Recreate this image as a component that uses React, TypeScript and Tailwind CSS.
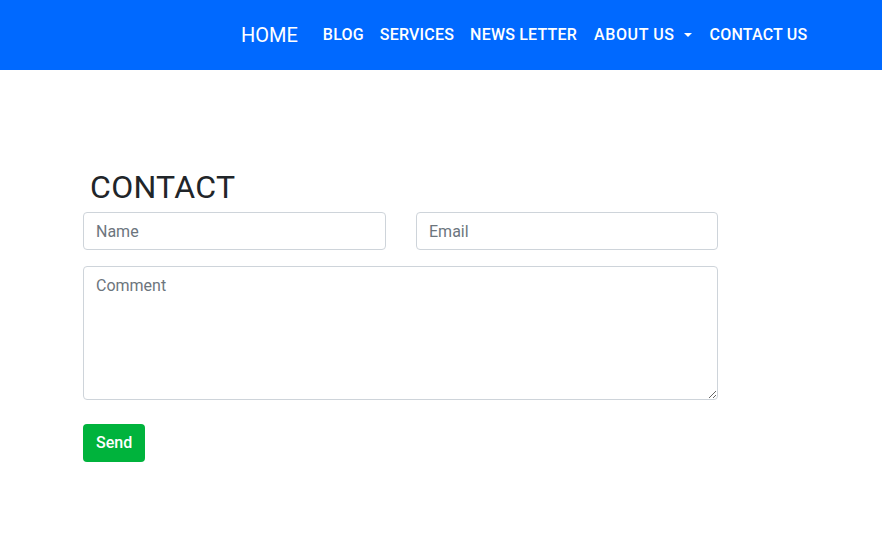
import React from "react";

export default function App() {
  const font = { fontFamily: 'Roboto, "Liberation Sans", Arial, sans-serif' };
  return (
    <div className="min-h-[550px] bg-white" style={font}>
      <nav className="h-[70px] bg-[#0069ff] flex items-center">
        <div className="flex items-center ml-[241px] text-white">
          <span className="text-[20px] mr-[25px] leading-none">HOME</span>
          <div className="flex items-center gap-[16px] text-[16px] font-medium leading-none tracking-[0.2px]">
            <span>BLOG</span>
            <span>SERVICES</span>
            <span className="mr-[1px]">NEWS LETTER</span>
            <span className="flex items-center tracking-[0.6px]">
              ABOUT US
              <span className="ml-[9px] inline-block w-0 h-0 border-l-[4px] border-r-[4px] border-t-[4px] border-l-transparent border-r-transparent border-t-white" />
            </span>
            <span className="ml-[2px]">CONTACT US</span>
          </div>
        </div>
      </nav>
      <div className="pl-[83px] w-[718px] pt-[98px]">
        <h1 className="text-[32px] leading-[38px] font-normal tracking-[0.3px] text-[#212529] ml-[7px] mb-[6px]">CONTACT</h1>
        <div className="flex gap-[30px] mb-[16px]">
          <input
            placeholder="Name"
            className="w-[303px] h-[38px] border border-[#ced4da] rounded-[4px] px-[12px] text-[16px] placeholder:text-[#6c757d] outline-none"
          />
          <input
            placeholder="Email"
            className="w-[302px] h-[38px] border border-[#ced4da] rounded-[4px] px-[12px] text-[16px] placeholder:text-[#6c757d] outline-none"
          />
        </div>
        <textarea
          placeholder="Comment"
          className="block w-[635px] h-[134px] border border-[#ced4da] rounded-[4px] px-[12px] py-[7px] text-[16px] placeholder:text-[#6c757d] outline-none"
        />
        <button className="mt-[24px] h-[38px] px-[13px] bg-[#00b33c] text-white text-[16px] font-medium rounded-[4px]">
          Send
        </button>
      </div>
    </div>
  );
}
